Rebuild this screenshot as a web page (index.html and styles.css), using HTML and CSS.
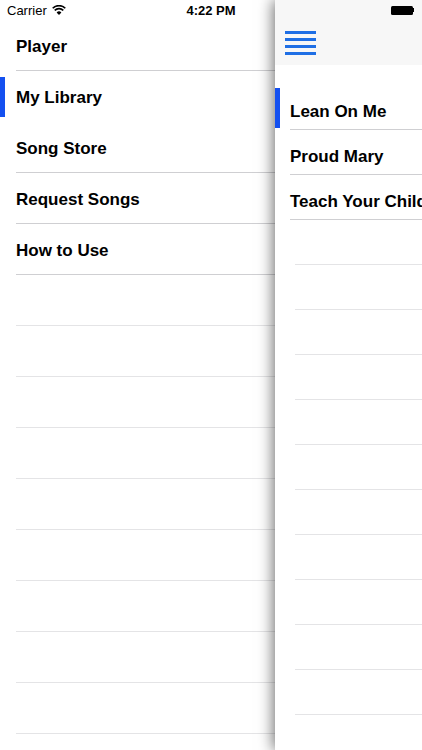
FILE: index.html
```html
<!DOCTYPE html>
<html>
<head>
<meta charset="utf-8">
<link rel="stylesheet" href="styles.css">
</head>
<body>
<div class="screen">
  <div class="statusbar">
    <div class="carrier">Carrier
      <svg class="wifi" width="14" height="10" viewBox="0 0 14 10"><path d="M7 10 L4.6 7.4 A3.4 3.4 0 0 1 9.4 7.4 Z" fill="#000"/><path d="M2.7 5.4 A6.2 6.2 0 0 1 11.3 5.4" stroke="#000" stroke-width="1.6" fill="none"/><path d="M0.7 3.2 A9 9 0 0 1 13.3 3.2" stroke="#000" stroke-width="1.6" fill="none"/></svg>
    </div>
    <div class="time">4:22 PM</div>
    <div class="battery"><span class="cell"></span><span class="nub"></span></div>
  </div>
  <ul class="menu">
    <li class="row"><span>Player</span></li>
    <li class="row selected"><span>My Library</span></li>
    <li class="row"><span>Song Store</span></li>
    <li class="row"><span>Request Songs</span></li>
    <li class="row"><span>How to Use</span></li>
    <li class="row empty"></li>
    <li class="row empty"></li>
    <li class="row empty"></li>
    <li class="row empty"></li>
    <li class="row empty"></li>
    <li class="row empty"></li>
    <li class="row empty"></li>
    <li class="row empty"></li>
    <li class="row empty"></li>
    <li class="row empty"></li>
  </ul>
  <div class="panel">
    <div class="navbar">
      <svg class="hamburger" width="31" height="24" viewBox="0 0 31 24"><rect x="0" y="0" width="31" height="3" fill="#1f6fe5"/><rect x="0" y="7" width="31" height="3" fill="#1f6fe5"/><rect x="0" y="14" width="31" height="3" fill="#1f6fe5"/><rect x="0" y="21" width="31" height="3" fill="#1f6fe5"/></svg>
    </div>
    <ul class="songs">
      <li class="song selected"><span>Lean On Me</span></li>
      <li class="song"><span>Proud Mary</span></li>
      <li class="song"><span>Teach Your Children</span></li>
      <li class="song empty"></li>
      <li class="song empty"></li>
      <li class="song empty"></li>
      <li class="song empty"></li>
      <li class="song empty"></li>
      <li class="song empty"></li>
      <li class="song empty"></li>
      <li class="song empty"></li>
      <li class="song empty"></li>
      <li class="song empty"></li>
      <li class="song empty"></li>
      <li class="song empty"></li>
      <li class="song empty"></li>
    </ul>
  </div>
</div>
</body>
</html>
```
FILE: styles.css
```css
* { box-sizing: border-box; }
html, body { margin: 0; padding: 0; }
body {
  font-family: "Liberation Sans", Arial, sans-serif;
  background: #fff;
  color: #000;
}
.screen {
  position: relative;
  width: 422px;
  height: 750px;
  overflow: hidden;
  background: #fff;
}
.statusbar {
  position: absolute;
  top: 0; left: 0; right: 0;
  height: 20px;
  z-index: 5;
  display: flex;
  align-items: center;
  padding: 0 6px 0 7px;
  font-size: 13px;
}
.carrier {
  display: flex;
  align-items: center;
  gap: 5px;
  flex: 1;
}
.wifi { margin-top: -1px; }
.time {
  position: absolute;
  left: 0; right: 0;
  text-align: center;
  font-weight: bold;
  font-size: 13px;
  pointer-events: none;
}
.battery {
  display: flex;
  align-items: center;
  margin-right: 2px;
}
.battery .cell {
  width: 22px;
  height: 9px;
  background: #000;
  border-radius: 1.5px;
}
.battery .nub {
  width: 1.5px;
  height: 4px;
  background: #000;
}
.menu {
  list-style: none;
  margin: 0;
  padding: 20px 0 0 0;
}
.row {
  position: relative;
  height: 51px;
  display: flex;
  align-items: center;
  padding: 2px 0 0 16px;
  font-size: 17px;
  font-weight: bold;
}
.row::after {
  content: "";
  position: absolute;
  left: 16px; right: 0; bottom: 0;
  height: 1px;
  background: #cfcfd2;
}
.row.empty::after { background: #e4e4e6; }
.row.selected::after { display: none; }
.row.selected::before {
  content: "";
  position: absolute;
  left: 0; top: 6px;
  width: 5px; height: 40px;
  background: #1450f0;
}
.panel {
  position: absolute;
  top: 0; left: 275px;
  width: 300px;
  height: 750px;
  background: #fff;
  box-shadow: -2px 0 14px rgba(0,0,0,0.55);
  z-index: 3;
}
.navbar {
  height: 65px;
  background: #f7f7f7;
  padding: 31px 0 0 10px;
}
.hamburger { display: block; }
.songs {
  list-style: none;
  margin: 0;
  padding: 20px 0 0 0;
}
.song {
  position: relative;
  height: 45px;
  display: flex;
  align-items: center;
  padding: 9px 0 0 15px;
  font-size: 17px;
  font-weight: bold;
  white-space: nowrap;
}
.song::after {
  content: "";
  position: absolute;
  left: 15px; right: 0; bottom: 0;
  height: 1px;
  background: #cfcfd2;
}
.song.empty::after { left: 20px; background: #e4e4e6; }
.song.selected::before {
  content: "";
  position: absolute;
  left: 0; top: 3px;
  width: 5px; height: 40px;
  background: #1450f0;
}
```
